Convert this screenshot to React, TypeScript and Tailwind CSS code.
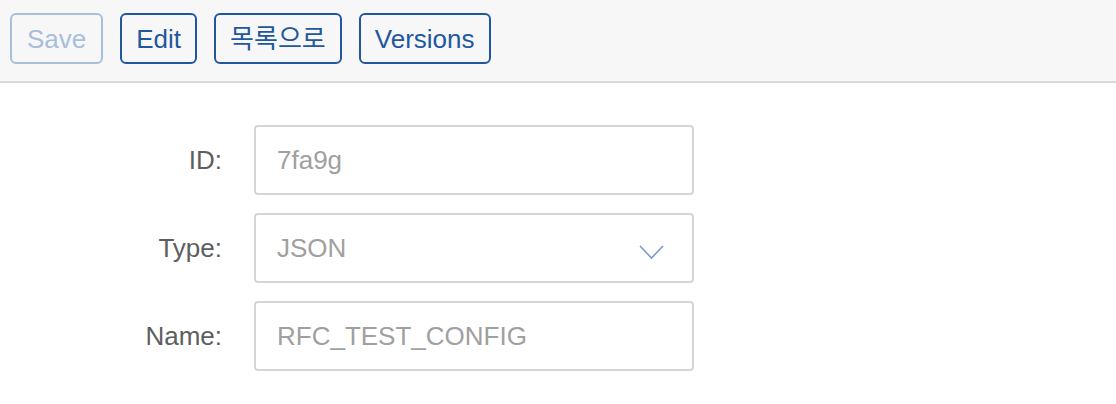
const font = { fontFamily: '"Liberation Sans", "Noto Sans CJK KR", Arial, sans-serif' }

function ToolbarButton({ label, disabled, tight }: { label: string; disabled?: boolean; tight?: boolean }) {
  return (
    <button
      disabled={disabled}
      className={
        'h-[51px] rounded-[6px] border-2 text-[26px] leading-none ' +
        (tight ? 'px-[14px] ' : 'px-[15px] ') +
        (disabled ? 'border-[#a9bedc] text-[#a9bedc]' : 'border-[#2257a0] text-[#2257a0]')
      }
    >
      {label}
    </button>
  )
}

function Chevron() {
  return (
    <svg width="25" height="15" viewBox="0 0 25 15" fill="none" className="mt-[8px]">
      <polyline points="1,1 12.5,13 24,1" stroke="#7b9ad0" strokeWidth="1.6" />
    </svg>
  )
}

function Field({ label, value, select }: { label: string; value: string; select?: boolean }) {
  return (
    <div className="flex items-center">
      <div className="w-[222px] text-right text-[26px] text-[#5e5e5e]">{label}</div>
      <div className="ml-[32px] flex h-[70px] w-[440px] items-center justify-between rounded-[4px] border-2 border-[#d5d5d5] pl-[21px] pr-[28px]">
        <span className="text-[26px] text-[#a0a0a0]">{value}</span>
        {select && <Chevron />}
      </div>
    </div>
  )
}

export default function App() {
  return (
    <div className="h-[404px] w-[1116px] bg-white" style={font}>
      <div className="flex h-[83px] items-start gap-[17px] border-b-2 border-[#d9d9d9] bg-[#f7f7f7] px-[10px] pt-[13px]">
        <ToolbarButton label="Save" disabled />
        <ToolbarButton label="Edit" tight />
        <ToolbarButton label="목록으로" tight />
        <ToolbarButton label="Versions" tight />
      </div>
      <div className="flex flex-col gap-[18px] pt-[42px]">
        <Field label="ID:" value="7fa9g" />
        <Field label="Type:" value="JSON" select />
        <Field label="Name:" value="RFC_TEST_CONFIG" />
      </div>
    </div>
  )
}
